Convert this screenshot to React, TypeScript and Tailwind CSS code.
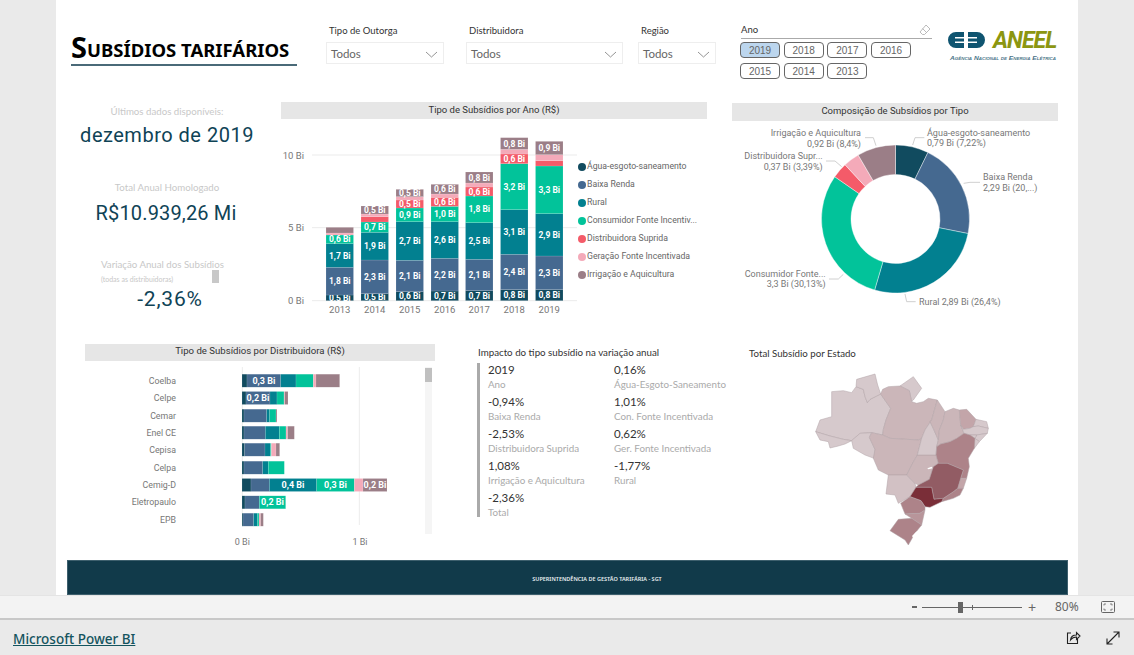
import React from 'react';

const UI = { fontFamily: 'Lato, "Noto Sans", sans-serif' };
const DIN = { fontFamily: 'Roboto, "Noto Sans", sans-serif' };
const TITLE = { fontFamily: '"Noto Sans", "Open Sans", sans-serif' };

const COLORS = ['#114b5f', '#456990', '#028090', '#02c39a', '#f45b69', '#f4aab9', '#9b7e87'];

const legend = [
  'Água-esgoto-saneamento',
  'Baixa Renda',
  'Rural',
  'Consumidor Fonte Incentiv...',
  'Distribuidora Suprida',
  'Geração Fonte Incentivada',
  'Irrigação e Aquicultura',
];

// topos de cada segmento, medidos na imagem ampliada 3x
const years = [
  { year: '2013', x: 326, tops: [600, 517, 446, 420, 420, 414, 397], labels: ['0,5', '1,8', '1,7', '0,6', '', '', ''] },
  { year: '2014', x: 361, tops: [596, 495, 412, 381, 365, 357, 333], labels: ['0,5', '2,3', '1,9', '0,7', '', '', '0,5'] },
  { year: '2015', x: 396, tops: [590, 496, 380, 339, 315, 305, 283], labels: ['0,6', '2,1', '2,7', '0,9', '0,5', '', '0,5'] },
  { year: '2016', x: 431, tops: [588, 490, 380, 334, 307, 297, 268], labels: ['0,7', '2,2', '2,6', '1,0', '0,6', '', '0,6'] },
  { year: '2017', x: 465.5, tops: [587, 493, 383, 303, 276, 264, 231], labels: ['0,7', '2,1', '2,5', '1,8', '0,6', '', '0,8'] },
  { year: '2018', x: 500.5, tops: [584, 478, 344, 206, 177, 163, 128], labels: ['0,8', '2,4', '3,1', '3,2', '0,6', '', '0,8'] },
  { year: '2019', x: 535.5, tops: [584, 483, 356, 213, 197, 179, 139], labels: ['0,8', '2,3', '2,9', '3,3', '', '', '0,9'] },
];

function YearChart() {
  const px = (x: number) => x - 281;
  const py = (z: number) => 95 + z / 3 - 119;
  return (
    <svg width={297} height={200} className="shrink-0" style={DIN}>
      {[180, 398, 617].map((z, i) => (
        <g key={z}>
          <line x1={31} x2={296} y1={py(z)} y2={py(z)} stroke="#ebebeb" />
          <text x={23} y={py(z)} textAnchor="end" dominantBaseline="central" fontSize={9.5} fill="#777">
            {['10 Bi', '5 Bi', '0 Bi'][i]}
          </text>
        </g>
      ))}
      {years.map((b) => (
        <g key={b.year}>
          {b.tops.map((t, i) => {
            const bottom = i === 0 ? 617 : b.tops[i - 1];
            if (bottom === t) return null;
            return (
              <g key={i}>
                <rect x={px(b.x)} y={py(t)} width={27.5} height={(bottom - t) / 3} fill={COLORS[i]} stroke="#ffffff" strokeOpacity={0.25} strokeWidth={0.5} />
                {b.labels[i] && (
                  <text x={px(b.x) + 13.75} y={py((t + bottom) / 2)} textAnchor="middle" dominantBaseline="central" fontSize={8.5} fontWeight={700} fill="#ffffff">
                    {b.labels[i]} Bi
                  </text>
                )}
              </g>
            );
          })}
          <text x={px(b.x) + 13.75} y={py(643)} textAnchor="middle" dominantBaseline="central" fontSize={9.5} fill="#777">
            {b.year}
          </text>
        </g>
      ))}
    </svg>
  );
}

const donutValues = [7.22, 20.93, 26.4, 30.13, 3.39, 3.53, 8.4];

function arc(cx: number, cy: number, r0: number, r1: number, from: number, to: number) {
  const p = (r: number, a: number) => {
    const t = (a / 100) * Math.PI * 2;
    return `${(cx + r * Math.sin(t)).toFixed(2)} ${(cy - r * Math.cos(t)).toFixed(2)}`;
  };
  const big = to - from > 50 ? 1 : 0;
  return `M${p(r1, from)}A${r1} ${r1} 0 ${big} 1 ${p(r1, to)}L${p(r0, to)}A${r0} ${r0} 0 ${big} 0 ${p(r0, from)}Z`;
}

const donutLabels = [
  { x: 606, y: 113, a: 'start', t: 'Água-esgoto-saneamento' },
  { x: 606, y: 145, a: 'start', t: '0,79 Bi (7,22%)' },
  { x: 774, y: 246, a: 'start', t: 'Baixa Renda' },
  { x: 774, y: 278, a: 'start', t: '2,29 Bi (20,...)' },
  { x: 582, y: 620, a: 'start', t: 'Rural 2,89 Bi (26,4%)' },
  { x: 302, y: 537, a: 'end', t: 'Consumidor Fonte...' },
  { x: 302, y: 568, a: 'end', t: '3,3 Bi (30,13%)' },
  { x: 293, y: 183, a: 'end', t: 'Distribuidora Supr...' },
  { x: 293, y: 215, a: 'end', t: '0,37 Bi (3,39%)' },
  { x: 408, y: 113, a: 'end', t: 'Irrigação e Aquicultura' },
  { x: 408, y: 148, a: 'end', t: '0,92 Bi (8,4%)' },
];

const donutLeaders = [
  '563,150 570,128 598,128',
  '716,265 735,262 765,262',
  '540,597 545,620 572,620',
  '312,552 340,552 355,538',
  '303,198 330,198 350,215',
  '420,128 445,128 453,152',
];

function Donut() {
  const zx = (x: number) => x / 3 - 7;
  const zy = (y: number) => y / 3 - 26;
  let acc = 0;
  return (
    <svg width={326} height={222} style={DIN}>
      {donutValues.map((v, i) => {
        const d = arc(163.5, 98, 44.5, 74, acc, acc + v);
        acc += v;
        return <path key={i} d={d} fill={COLORS[i]} stroke="#ffffff" strokeWidth={0.4} />;
      })}
      {donutLeaders.map((l) => (
        <polyline
          key={l}
          points={l
            .split(' ')
            .map((p) => {
              const [x, y] = p.split(',').map(Number);
              return `${zx(x)},${zy(y)}`;
            })
            .join(' ')}
          fill="none"
          stroke="#c4c4c4"
          strokeWidth={0.8}
        />
      ))}
      {donutLabels.map((l) => (
        <text key={l.t} x={zx(l.x)} y={zy(l.y)} textAnchor={l.a as 'start' | 'end'} dominantBaseline="central" fontSize={9} fill="#777">
          {l.t}
        </text>
      ))}
    </svg>
  );
}

// [fim do segmento na ampliação, cor, rótulo]
const distribuidoras: { name: string; segs: [number, number, string?][] }[] = [
  { name: 'Coelba', segs: [[501, 0], [602, 1, '0,3 Bi'], [648, 2], [700, 3], [708, 5], [779, 6]] },
  { name: 'Celpe', segs: [[498, 0], [570, 1, '0,2 Bi'], [591, 2], [612, 3], [614, 5], [624, 6]] },
  { name: 'Cemar', segs: [[492, 0], [560, 1], [569, 2], [588, 3], [591, 6]] },
  { name: 'Enel CE', segs: [[492, 0], [556, 1], [598, 2], [618, 3], [623, 5], [643, 6]] },
  { name: 'Cepisa', segs: [[494, 0], [555, 1], [571, 2], [574, 3], [588, 5], [599, 6]] },
  { name: 'Celpa', segs: [[492, 0], [548, 1], [565, 2], [613, 3]] },
  { name: 'Cemig-D', segs: [[513, 0], [568, 1], [710, 2, '0,4 Bi'], [823, 3, '0,3 Bi'], [849, 5], [921, 6, '0,2 Bi']] },
  { name: 'Eletropaulo', segs: [[495, 0], [538, 1], [617, 3, '0,2 Bi']] },
  { name: 'EPB', segs: [[489, 0], [521, 1], [532, 2], [537, 3], [542, 5], [550, 6]] },
];

function DistChart() {
  const zx = (x: number) => 80 + x / 3 - 85;
  const zy = (y: number) => 335 + y / 3 - 361;
  const rows = [137, 189, 242, 293, 344, 398, 450, 502, 554];
  return (
    <svg width={340} height={199} className="shrink-0" style={DIN}>
      <line x1={zx(487)} x2={zx(487)} y1={6} y2={164} stroke="#ececec" />
      <line x1={zx(838)} x2={zx(838)} y1={6} y2={164} stroke="#ececec" />
      {distribuidoras.map((d, r) => {
        let from = 486;
        const cy = zy(rows[r]);
        return (
          <g key={d.name}>
            <text x={zx(288)} y={cy} textAnchor="end" dominantBaseline="central" fontSize={8.8} fill="#777">
              {d.name}
            </text>
            {d.segs.map(([to, c, label], i) => {
              const x = zx(from);
              const w = (to - from) / 3;
              from = to;
              return (
                <g key={i}>
                  <rect x={x} y={cy - 6.5} width={w} height={13} fill={COLORS[c]} stroke="#ffffff" strokeOpacity={0.3} strokeWidth={0.4} />
                  {label && (
                    <text x={x + w / 2} y={cy} textAnchor="middle" dominantBaseline="central" fontSize={9} fontWeight={700} fill="#ffffff">
                      {label}
                    </text>
                  )}
                </g>
              );
            })}
          </g>
        );
      })}
      <text x={zx(487)} y={zy(620)} textAnchor="middle" dominantBaseline="central" fontSize={9} fill="#777">
        0 Bi
      </text>
      <text x={zx(840)} y={zy(620)} textAnchor="middle" dominantBaseline="central" fontSize={9} fill="#777">
        1 Bi
      </text>
    </svg>
  );
}

const impacto = [
  ['2019', 'Ano'],
  ['0,16%', 'Água-Esgoto-Saneamento'],
  ['-0,94%', 'Baixa Renda'],
  ['1,01%', 'Con. Fonte Incentivada'],
  ['-2,53%', 'Distribuidora Suprida'],
  ['0,62%', 'Ger. Fonte Incentivada'],
  ['1,08%', 'Irrigação e Aquicultura'],
  ['-1,77%', 'Rural'],
  ['-2,36%', 'Total'],
];

const L1 = '#d6c9cc';
const L2 = '#cbb6b9';
const L3 = '#c3a5a9';
const L4 = '#ad8389';

// polígonos aproximados dos estados, em coordenadas da ampliação 3x
const estados: [string, string][] = [
  ['65,65 100,62 125,68 138,50 160,58 165,80 172,98 180,88 200,78 212,72 242,115 228,150 220,178 218,195 185,188 150,190 125,212 100,208 60,198 17,185 30,150 65,140', L1],
  ['17,185 60,198 100,208 125,212 105,222 85,228 60,234 55,215 30,210', L1],
  ['138,50 140,28 195,12 203,45 212,72 200,78 180,88 172,98 165,80 160,58', L1],
  ['270,48 310,20 335,55 310,90 305,95 298,62', L1],
  ['212,72 218,58 235,50 270,48 298,62 305,95 320,100 340,95 355,85 382,90 365,150 345,180 335,205 325,210 240,205 218,195 220,178 228,150 242,115', L2],
  ['125,212 150,190 185,188 178,202 195,238 192,265 165,255 130,235', L1],
  ['178,202 185,188 218,195 240,205 325,210 335,205 322,255 305,285 290,315 235,315 205,300 190,265 195,238', L2],
  ['235,315 290,315 315,340 318,352 300,380 265,400 255,375 228,372', '#d2c1c4'],
  ['322,255 378,255 385,280 370,290 358,328 325,345 315,340 290,315 305,285', L2],
  ['360,155 372,180 385,210 380,230 378,255 322,255 335,205 345,180 365,150', L1],
  ['382,90 405,125 400,150 388,180 385,210 372,180 360,155 365,150', L2],
  ['405,125 430,115 448,120 452,165 462,190 440,205 420,215 392,222 380,230 385,210 388,180 400,150', L2],
  ['448,120 470,118 498,148 490,170 480,175 460,178 452,165', L3],
  ['498,148 530,155 535,175 505,168 490,170', L1],
  ['452,165 460,178 480,175 490,170 505,168 535,175 532,190 500,195 480,195 462,190', L1],
  ['500,195 532,190 508,215 495,205', L1],
  ['480,195 500,195 495,205 508,215 493,235', L1],
  ['380,230 392,222 420,215 440,205 462,190 480,195 495,205 493,235 475,265 478,290 470,325 452,325 460,300 412,280 385,280 378,255', L4],
  ['452,325 470,325 460,355 443,355', L3],
  ['400,385 430,365 443,355 460,355 450,375 430,385 395,395', L4],
  ['325,345 358,328 370,290 385,280 412,280 460,300 452,325 443,355 430,365 400,385 372,388 365,352 318,352', '#925c64'],
  ['300,380 318,352 365,352 372,388 400,385 395,395 360,412 345,410 333,392', '#7a2e38'],
  ['272,400 300,380 333,392 345,410 345,420 330,430 285,432', L4],
  ['285,432 330,430 345,420 335,465 305,445', '#b8959a'],
  ['240,482 265,448 305,445 335,465 315,490 295,525 285,510', L4],
];

function BrazilMap() {
  return (
    <svg viewBox="0 0 570 540" className="w-[190px] h-[180px] ml-[61px] mt-[11px]">
      {estados.map(([points, fill]) => (
        <polygon key={points} points={points} fill={fill} stroke="#b0a3a6" strokeWidth={1.5} strokeLinejoin="round" />
      ))}
      <polygon points="352,295 365,290 368,295 355,298" fill="#ffffff" />
      <polygon points="306,498 320,484 322,490 310,504" fill="#ffffff" />
    </svg>
  );
}

function Logo() {
  return (
    <svg width={114} height={42} className="mt-[24px] shrink-0">
      <g transform="translate(0 6)">
        <path d="M10 2H18V7H9V8.500H18V11.500H9V13H18V18H10A8 8 0 0 1 10 2Z" fill="#0f5470" />
        <path d="M22 2H31A8 8 0 0 1 31 18H22V13H31V11.500H22V8.500H31V7H22Z" fill="#0f5470" />
      </g>
      <text x={47} y={24} fontSize={23} fontWeight={700} fontStyle="italic" letterSpacing={-0.9} fill="#8c9611" style={DIN}>
        ANEEL
      </text>
      <text x={4} y={36} textLength={106} lengthAdjust="spacingAndGlyphs" fontSize={6} fontWeight={700} fontStyle="italic" fill="#4a7488" style={{ fontFamily: '"Liberation Sans", sans-serif', fontVariant: 'small-caps' }}>
        Agência Nacional de Energia Elétrica
      </text>
    </svg>
  );
}

function Slicer({ label, width, gap }: { label: string; width: string; gap: string }) {
  return (
    <div className={`${width} ${gap} shrink-0 pt-[24px]`}>
      <div className="h-[13px] pl-[3px] text-[9.5px] leading-[13px] text-[#333]">{label}</div>
      <div className="mt-[5px] h-[22px] border border-[#eeeeee] flex items-center justify-between pl-[4px] pr-[5px] pt-[2px] text-[11.5px] text-[#666]">
        <span>Todos</span>
        <svg width="13" height="7" viewBox="0 0 13 7" fill="none" stroke="#888" strokeWidth="0.9">
          <path d="M1 1l5.500 5L12 1" />
        </svg>
      </div>
    </div>
  );
}

export default function App() {
  return (
    <div className="w-[1134px] h-[655px] bg-[#eaeaea] flex flex-col overflow-hidden" style={UI}>
      <div className="w-[1022px] h-[595px] ml-[56px] bg-white flex flex-col shrink-0">
        {/* Cabeçalho */}
        <div className="h-[102px] flex items-start shrink-0">
          <div className="ml-[15px] w-[226px] h-[66px] shrink-0 flex items-end border-b-2 border-[#4a6a78] pb-[3px] font-bold text-black leading-none whitespace-nowrap" style={TITLE}>
            <span className="text-[29px] leading-none">S</span>
            <span className="text-[18.5px] leading-[23px] uppercase">ubsídios tarifários</span>
          </div>
          <Slicer label="Tipo de Outorga" width="w-[118px]" gap="ml-[29px]" />
          <Slicer label="Distribuidora" width="w-[157px]" gap="ml-[22px]" />
          <Slicer label="Região" width="w-[78px]" gap="ml-[15px]" />
          <div className="ml-[24px] w-[192px] shrink-0 pt-[22px]">
            <div className="h-[17px] ml-px flex items-center justify-between border-b border-[#aaaaaa] pr-[1px] text-[9.5px] text-[#333]">
              <span>Ano</span>
              <svg width="12" height="12" viewBox="0 0 12 12" fill="none" stroke="#aaa" strokeWidth="0.8">
                <path d="M7 1l4 4-5.500 5.500H3.500L1 8z" />
                <path d="M3.500 4.500l4 4" />
              </svg>
            </div>
            <div className="mt-[3px] flex flex-wrap gap-x-[3.7px] gap-y-[5px] w-[180px] text-[10px]" style={{ fontFamily: '"Liberation Sans", sans-serif' }}>
              {['2019', '2018', '2017', '2016', '2015', '2014', '2013'].map((y, i) => (
                <div
                  key={y}
                  className={`w-[40px] h-[16px] rounded-[4px] border border-[#666] flex items-center justify-center text-[#666] ${i === 0 ? 'bg-[#bcd6ee]' : 'bg-white'}`}
                >
                  {y}
                </div>
              ))}
            </div>
          </div>
          <div className="ml-[14px]">
            <Logo />
          </div>
        </div>

        {/* Indicadores, barras por ano, composição */}
        <div className="h-[242px] flex items-start shrink-0">
          <div className="ml-[15px] w-[192px] shrink-0 text-center" style={DIN}>
            <div className="mt-[2px] h-[14px] leading-[14px] text-[9.7px] text-[#c8c8c8]" style={UI}>Últimos dados disponíveis:</div>
            <div className="mt-[3px] h-[28px] leading-[28px] text-[20px] tracking-[0.5px] text-[#0f4356]">dezembro de 2019</div>
            <div className="mt-[31px] h-[14px] leading-[14px] text-[9.7px] text-[#c8c8c8]" style={UI}>Total Anual Homologado</div>
            <div className="mt-[6px] h-[26px] leading-[26px] pr-[2px] text-[20px] tracking-[0.15px] text-[#0f4356]">R$10.939,26 Mi</div>
            <div className="relative" style={UI}>
              <div className="mt-[31px] h-[14px] leading-[14px] pl-[30px] text-left text-[9.7px] text-[#c8c8c8]">Variação Anual dos Subsídios</div>
              <div className="mt-[3px] h-[10px] leading-[10px] pl-[30px] text-left text-[7px] text-[#c8c8c8]">(todas as distribuidoras)</div>
              <div className="absolute left-[141px] top-[13px] w-[7px] h-[13px] bg-[#c8c8c8]" />
            </div>
            <div className="mt-[2px] h-[26px] leading-[26px] pl-[6px] text-[21px] tracking-[0.8px] text-[#0f4356]">-2,36%</div>
          </div>

          <div className="ml-[18px] w-[426px] shrink-0">
            <div className="h-[17px] bg-[#e6e6e6] text-center text-[9.5px] leading-[16px] text-[#333]" style={DIN}>Tipo de Subsídios por Ano (R$)</div>
            <div className="flex">
              <YearChart />
              <div className="pt-[39px] text-[8.7px] text-[#666] whitespace-nowrap" style={DIN}>
                {legend.map((l, i) => (
                  <div key={l} className="h-[18px] flex items-center gap-px">
                    <span className="w-[8px] h-[8px] rounded-full shrink-0" style={{ backgroundColor: COLORS[i] }} />
                    <span>{l}</span>
                  </div>
                ))}
              </div>
            </div>
          </div>

          <div className="ml-[25px] w-[326px] shrink-0 mt-px">
            <div className="h-[18px] bg-[#e6e6e6] text-center text-[9.5px] leading-[16px] text-[#333]" style={DIN}>Composição de Subsídios por Tipo</div>
            <Donut />
          </div>
        </div>

        {/* Distribuidoras, impacto, mapa */}
        <div className="h-[216px] flex items-start shrink-0">
          <div className="ml-[29px] w-[350px] shrink-0">
            <div className="h-[17px] bg-[#e6e6e6] text-center text-[9.6px] leading-[14px] text-[#333]" style={DIN}>Tipo de Subsídios por Distribuidora (R$)</div>
            <div className="flex">
              <DistChart />
              <div className="w-[7px] h-[167px] mt-[6px] bg-[#f5f5f5]">
                <div className="h-[14px] mt-px bg-[#c0c0c0]" />
              </div>
            </div>
          </div>

          <div className="ml-[42px] w-[260px] shrink-0">
            <div className="h-[16px] leading-[16px] pl-px text-[9.75px] text-[#333]">Impacto do tipo subsídio na variação anual</div>
            <div className="mt-[3px] h-[154px] border-l-[3px] border-[#aaaaaa] pl-[8px] grid grid-cols-[126px_1fr] auto-rows-[32px]">
              {impacto.map(([v, l]) => (
                <div key={l} className="whitespace-nowrap">
                  <div className="h-[14px] leading-[14px] text-[11.5px] text-[#333]">{v}</div>
                  <div className="h-[14px] leading-[14px] text-[9.8px] text-[#aaaaaa]">{l}</div>
                </div>
              ))}
            </div>
          </div>

          <div className="ml-[12px] w-[280px] shrink-0">
            <div className="mt-[3px] h-[12px] leading-[12px] text-[9.7px] text-[#333]">Total Subsídio por Estado</div>
            <BrazilMap />
          </div>
        </div>

        <div className="ml-[11px] w-[1001px] h-[35px] bg-[#113a4a] border border-[#3d5f6d] flex items-center justify-center pl-[59px] pt-[4px] text-[5.5px] font-semibold text-[#e8eef0]" style={TITLE}>
          SUPERINTENDÊNCIA DE GESTÃO TARIFÁRIA - SGT
        </div>
      </div>

      {/* Barra de zoom */}
      <div className="h-[23px] bg-[#f3f3f3] border-t border-[#e4e4e4] flex items-center justify-end shrink-0 text-[#666]">
        <div className="w-[5px] h-[2px] bg-[#666]" />
        <div className="ml-[5px] w-[100px] h-px bg-[#666] relative">
          <div className="absolute left-[36px] -top-[5px] w-[5px] h-[11px] bg-[#666]" />
          <div className="absolute left-[50px] -top-[2px] w-px h-[5px] bg-[#666]" />
        </div>
        <div className="ml-[6px] text-[14px] leading-none">+</div>
        <div className="ml-[19px] w-[24px] text-[12px]" style={TITLE}>80%</div>
        <svg className="ml-[22px] mr-[19px]" width="14" height="12" viewBox="0 0 14 12" fill="none" stroke="#666">
          <rect x="0.5" y="0.5" width="13" height="11" rx="1" />
          <path d="M3 4.500V3h2M9 3h2v1.500M11 7.500V9H9M5 9H3V7.500" strokeWidth="0.8" />
        </svg>
      </div>

      {/* Rodapé */}
      <div className="flex-1 border-t-2 border-[#c8c8c8] flex items-center pl-[13px] pt-[3px]">
        <a href="#" className="text-[13.5px] font-medium text-[#14545e] underline" style={TITLE}>
          Microsoft Power BI
        </a>
        <svg className="ml-auto -mt-[3px]" width="15" height="15" viewBox="0 0 15 15" fill="none" stroke="#222" strokeWidth="1.1">
          <path d="M5 3H1.500v10.500h10V9" />
          <path d="M4.500 10c.3-3 2.500-5 6-5V2.500L14 6l-3.500 3.500V7c-2.500 0-4.500 1-6 3z" />
        </svg>
        <svg className="ml-[25px] mr-[14px] -mt-[3px]" width="14" height="14" viewBox="0 0 14 14" fill="none" stroke="#222" strokeWidth="1.1">
          <path d="M1 13L13 1M7.500 1H13v5.500M1 7.500V13h5.500" />
        </svg>
      </div>
    </div>
  );
}
